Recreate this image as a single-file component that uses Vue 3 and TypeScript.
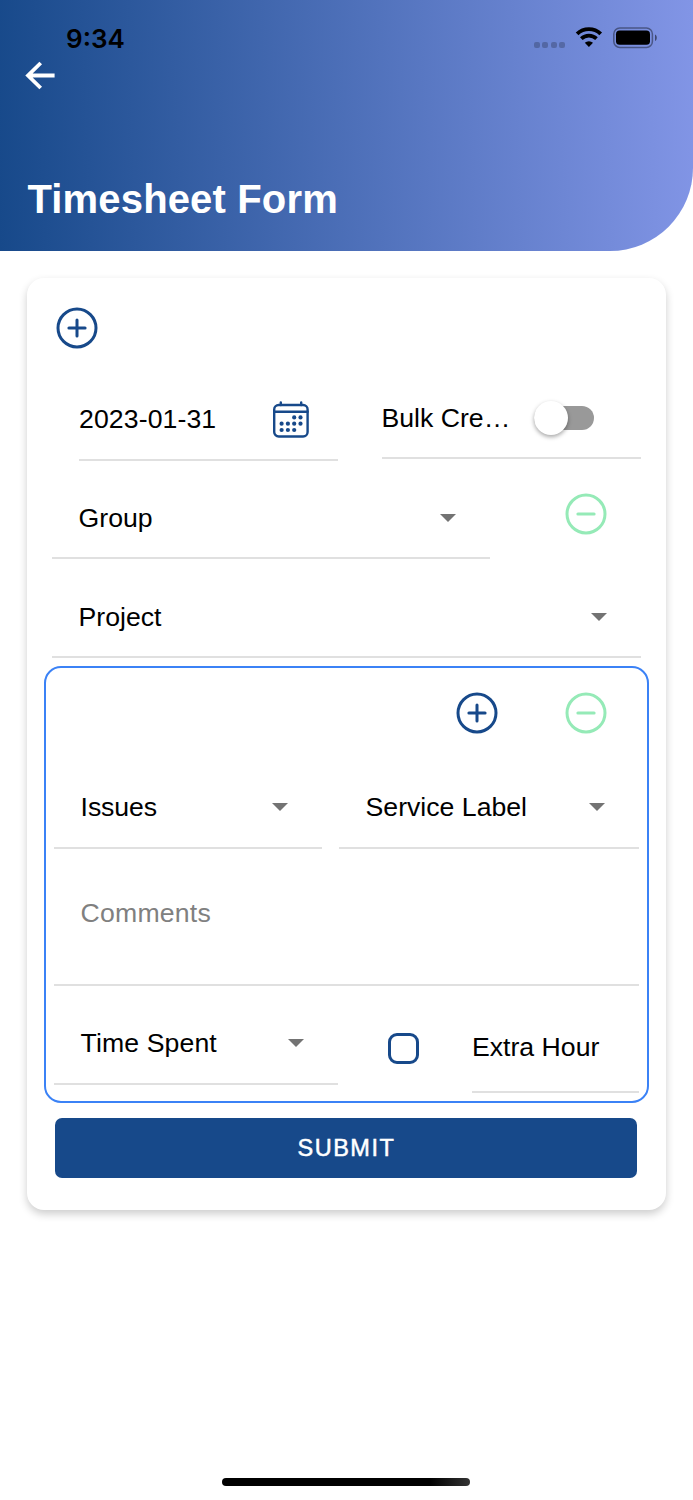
<script setup lang="ts">
import { ref } from 'vue'

const date = ref('2023-01-31')
const bulk = ref(false)
const extraHour = ref(false)

// Dots of the calendar icon, as [x, y] centres
const dots: [number, number][] = [
  [21.2, 16.4], [27.5, 16.4],
  [8.6, 22.7], [14.9, 22.7], [21.2, 22.7], [27.5, 22.7],
  [8.6, 29], [14.9, 29], [21.2, 29],
]
</script>

<template>
  <div class="screen">
    <header class="header">
      <div class="status">
        <span class="time">9:34</span>
        <div class="signals">
          <span class="cell"><i v-for="n in 4" :key="n"></i></span>
          <svg class="wifi" width="28" height="20" viewBox="0 0 28 20">
            <path d="M2.1 6.9a17 17 0 0 1 23.6 0" fill="none" stroke="#000" stroke-width="3.9" />
            <path d="M6.3 11.7a11 11 0 0 1 15.2 0" fill="none" stroke="#000" stroke-width="3.7" />
            <path d="M13.9 20 9.8 15.800a5.900 5.900 0 0 1 8.200 0z" fill="#000" />
          </svg>
          <svg class="battery" width="44" height="22" viewBox="0 0 44 22">
            <rect x=".8" y="1" width="38.6" height="19.4" rx="6" fill="none" stroke="#000" stroke-opacity=".4" stroke-width="1.5" />
            <rect x="3" y="3.6" width="34" height="14.2" rx="3.6" />
            <path d="M42 7.6c2.4 1 2.4 5.4 0 6.4z" fill-opacity=".5" />
          </svg>
        </div>
      </div>
      <svg class="back" width="32" height="30" viewBox="0 0 32 30">
        <path d="M30.600 14.500H4.600M16.700 2 4 14.500l12.700 12.500" fill="none" stroke="#fff" stroke-width="3.800" />
      </svg>
      <h1>Timesheet Form</h1>
    </header>

    <main class="card">
      <div class="row top">
        <svg class="circle" viewBox="0 0 42 42"><circle cx="21" cy="21" r="19" /><path d="M12.900 21h16.200M21 12.900v16.200" /></svg>
      </div>
      <div class="row dates">
        <div class="field date">
          <span class="label">{{ date }}</span>
          <svg class="calendar" width="36" height="37" viewBox="0 0 36 37">
            <rect x="1.200" y="4" width="33.400" height="31.500" rx="4.500" />
            <path d="M1.200 10.800h33.400M7.800 1.500v2.500M28.200 1.500v2.500" />
            <circle v-for="([x, y], i) in dots" :key="i" :cx="x" :cy="y" r="2.100" />
          </svg>
        </div>
        <div class="field bulk">
          <span class="label clip">Bulk Cre…</span>
          <span class="switch" :class="{ on: bulk }"><i></i></span>
        </div>
      </div>
      <div class="row group">
        <div class="field select"><span class="label">Group</span><i class="arrow"></i></div>
        <svg class="circle minus" viewBox="0 0 42 42"><circle cx="21" cy="21" r="19" /><path d="M12.900 21h16.200" /></svg>
      </div>
      <div class="row project">
        <div class="field select"><span class="label">Project</span><i class="arrow"></i></div>
      </div>

      <section class="issue">
        <div class="row actions">
          <svg class="circle" viewBox="0 0 42 42"><circle cx="21" cy="21" r="19" /><path d="M12.900 21h16.200M21 12.900v16.200" /></svg>
          <svg class="circle minus" viewBox="0 0 42 42"><circle cx="21" cy="21" r="19" /><path d="M12.900 21h16.200" /></svg>
        </div>
        <div class="row pair">
          <div class="field select issues"><span class="label">Issues</span><i class="arrow"></i></div>
          <div class="field select service"><span class="label">Service Label</span><i class="arrow"></i></div>
        </div>
        <div class="row">
          <div class="field comments"><span class="label">Comments</span></div>
        </div>
        <div class="row last">
          <div class="field select spent"><span class="label">Time Spent</span><i class="arrow"></i></div>
          <span class="check" :class="{ on: extraHour }"></span>
          <div class="field extra"><span class="label">Extra Hour</span></div>
        </div>
      </section>
      <button class="submit" type="button">SUBMIT</button>
    </main>
    <div class="home"></div>
  </div>
</template>

<style>
body { background: #fff; }
</style>

<style scoped>
* { box-sizing: border-box; }
.screen {
  display: flex;
  flex-direction: column;
  width: 693px;
  height: 1500px;
  overflow: hidden;
  background: #fff;
  font-family: "Liberation Sans", Arial, sans-serif;
  color: #000;
}
.header {
  height: 251px;
  flex: none;
  border-bottom-right-radius: 83px;
  background: linear-gradient(88deg, #17498a 0%, #8295e6 100%);
}
.status {
  display: flex;
  justify-content: space-between;
  height: 61px;
  padding: 23px 36px 0 66px;
}
.time {
  font: 600 26px/31px Inter, sans-serif;
}
.signals { display: flex; align-items: flex-start; }
.cell { display: flex; gap: 2.6px; padding-top: 19px; margin-right: 10px; }
.cell i { width: 5.8px; height: 6px; border-radius: 2px; background: rgba(0, 0, 0, .22); }
.wifi { margin: 4px 10px 0 0; }
.battery { margin-top: 4px; }
.back { display: block; margin: 0 0 0 24px; }
h1 {
  margin: 84px 0 0 27.5px;
  font-size: 40px;
  line-height: 48px;
  font-weight: 700;
  letter-spacing: .15px;
  color: #fff;
  white-space: nowrap;
}
.card {
  flex: none;
  width: 639px;
  height: 932px;
  margin: 27px 0 0 27px;
  border-radius: 17px;
  background: #fff;
  box-shadow: 0 4px 9px rgba(0, 0, 0, .2);
}
.row { display: flex; align-items: flex-start; }
.top { height: 100px; padding: 29px 0 0 29px; }
.dates { height: 83px; padding-left: 52px; gap: 43px; }
.field {
  display: flex;
  align-items: center;
  border-bottom: 2px solid #e0e0e0;
}
.label { font-size: 26.65px; line-height: 32px; white-space: nowrap; }
.select { justify-content: space-between; padding: 18px 34px 0 26.6px; }
.arrow {
  border: 8px solid transparent;
  border-top-color: #737373;
  border-bottom: 0;
}
.date { width: 259px; height: 83px; justify-content: space-between; padding-right: 29px; }
.date .label { letter-spacing: .1px; }
.bulk { width: 259.5px; height: 81px; justify-content: space-between; padding-right: 47px; margin-left: .5px; }
.calendar { margin-top: 1px; fill: none; stroke: #17498a; stroke-width: 2.4; stroke-linecap: round; }
.calendar circle { fill: #17498a; stroke: none; }
.switch {
  display: flex;
  align-items: center;
  width: 60px;
  height: 24px;
  border-radius: 12px;
  background: #999;
}
.switch i {
  width: 34px;
  height: 34px;
  margin-left: -.5px;
  border-radius: 50%;
  background: #fff;
  box-shadow: 0 2px 4px rgba(0, 0, 0, .35);
}
.circle {
  flex: none;
  width: 42px;
  height: 42px;
  fill: none;
  stroke: #17498a;
  stroke-width: 3;
  stroke-linecap: round;
}
.minus { stroke: #95eab7; }
.group { height: 98px; padding-left: 25px; }
.group .field { width: 438px; height: 98px; }
.group .circle { margin: 32px 0 0 74.5px; }
.project { height: 99px; padding-left: 25px; }
.project .field { width: 589px; height: 99px; }
.issue {
  width: 605px;
  height: 437px;
  margin: 8px 0 0 17px;
  padding: 1px 8px 0;
  border: 2px solid #3b82f6;
  border-radius: 17px;
}
.actions { height: 88px; padding-top: 23px; justify-content: flex-end; gap: 67px; padding-right: 32px; }
.pair { gap: 17px; }
.pair .field { height: 92px; padding-top: 10px; }
.issues { width: 268px; }
.issues .label { letter-spacing: -.1px; }
.service { width: 300px; }
.comments { width: 585px; height: 137px; padding: 0 0 7px 26.6px; color: #808080; }
.comments .label { letter-spacing: .2px; }
.spent { width: 284px; height: 99px; padding-top: 17px; }
.spent .label { letter-spacing: .1px; }
.check { width: 31px; height: 31px; margin: 46.5px 53px 0 50px; border: 3px solid #17498a; border-radius: 9px; }
.extra { width: 167px; height: 107px; padding-top: 17px; }
.submit {
  display: block;
  width: 582px;
  height: 60px;
  margin: 15px 0 0 28.4px;
  padding: 1px 0 0;
  border: 0;
  border-radius: 7px;
  background: #17498a;
  color: #fff;
  font: 23.5px/59px "Liberation Sans", Arial, sans-serif;
  letter-spacing: 1.5px;
  -webkit-text-stroke: .5px #fff;
}
.home {
  flex: none;
  width: 248px;
  height: 8px;
  margin: 268px 0 0 222.4px;
  border-radius: 4px;
  background: linear-gradient(90deg, #000 84%, #333 100%);
}
</style>
